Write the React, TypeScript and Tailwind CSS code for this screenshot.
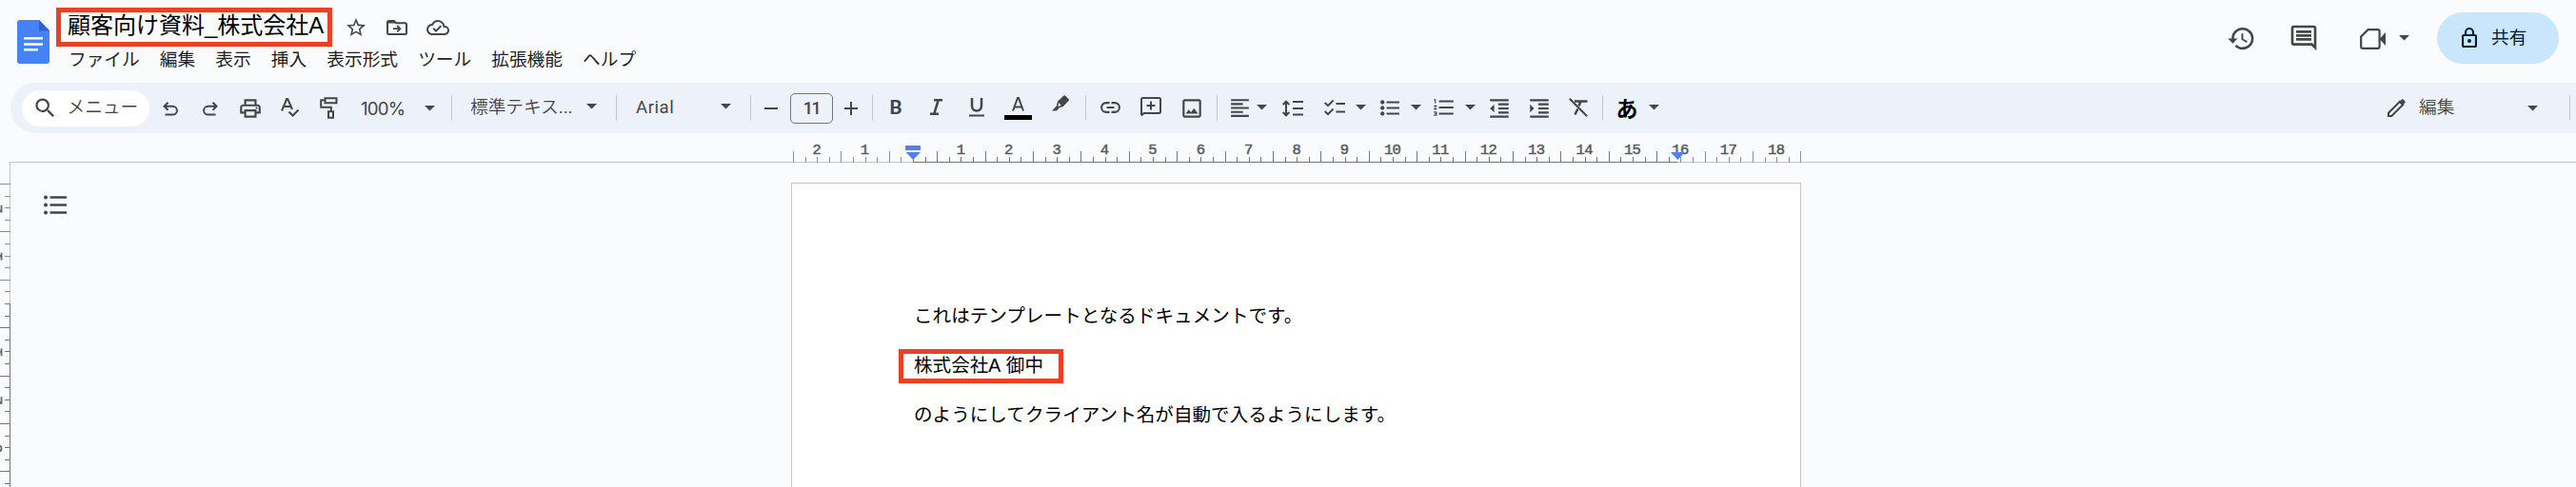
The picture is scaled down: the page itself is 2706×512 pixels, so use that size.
import React from "react";
import {
  MdStarOutline,
  MdOutlineCloudDone,
  MdSearch,
  MdOutlineImage,
  MdFormatAlignLeft,
  MdFormatListNumbered,
  MdFormatIndentDecrease,
  MdFormatIndentIncrease,
  MdHistory,
  MdOutlineInsertComment,
  MdOutlinePrint,
} from "react-icons/md";

const menus = ["ファイル", "編集", "表示", "挿入", "表示形式", "ツール", "拡張機能", "ヘルプ"];
const CM = 50.4;

function Cell({ className, children }: { className: string; children: React.ReactNode }) {
  return <div className={`flex h-[53px] shrink-0 items-center justify-center ${className}`}>{children}</div>;
}

function Sep({ className }: { className: string }) {
  return <div className={`h-[27px] w-px shrink-0 bg-[#c7c7c7] ${className}`} />;
}

function Caret({ className = "" }: { className?: string }) {
  return (
    <svg className={`h-[6px] w-[11px] shrink-0 ${className}`} viewBox="0 0 11 6">
      <path d="M0 0h11L5.5 5.5z" fill="#444746" />
    </svg>
  );
}

function Line({ w, h, className = "", sw = 2, children }: { w: number; h: number; className?: string; sw?: number; children: React.ReactNode }) {
  return (
    <svg width={w} height={h} viewBox={`0 0 ${w} ${h}`} className={`shrink-0 ${className}`} fill="none" stroke="currentColor" strokeWidth={sw}>
      {children}
    </svg>
  );
}

function Header() {
  return (
    <header className="flex h-[87px] shrink-0 items-start">
      <svg className="mt-[21px] ml-[18px] h-[46px] w-[34px] shrink-0" viewBox="0 0 34 46">
        <path d="M3 0h20l11 11v32a3 3 0 0 1-3 3H3a3 3 0 0 1-3-3V3a3 3 0 0 1 3-3z" fill="#4583f5" />
        <path d="M23 0l11 11.5H23z" fill="#2a63d0" />
        <path d="M7 18h20v2.6H7zM7 24.200h20v2.600H7zM7 30h15v2.600H7z" fill="#fff" />
      </svg>
      <div className="ml-[7px] flex flex-col pt-2">
        <div className="flex h-[41px] items-center">
          <div className="flex h-[41px] w-[290px] items-center border-[5px] border-[#ea4025] pl-[7px]">
            <h1 className="relative -top-[2px] text-[24px] leading-[30px] whitespace-nowrap text-black">顧客向け資料_株式会社A</h1>
          </div>
          <MdStarOutline className="ml-[13px] size-6 text-[#444746]" />
          <Line w={22} h={16} className="ml-[20px] text-[#444746]">
            <path d="M1 13.500V2.500Q1 1 2.500 1H8l2 2.300h9.500q1.500 0 1.500 1.500v8.700q0 1.500-1.500 1.500h-17Q1 15 1 13.500zM1 2.500h8" />
            <path d="M7 9.200h7M11.200 6l3.200 3.200-3.200 3.200" strokeWidth="1.800" />
          </Line>
          <MdOutlineCloudDone className="ml-[20px] size-6 text-[#444746]" />
        </div>
        <nav className="mt-px flex h-[26px] items-center gap-[21.200px] pl-[13px] text-[18.670px] whitespace-nowrap text-[#1f1f1f]">
          {menus.map((m) => (
            <span key={m}>{m}</span>
          ))}
        </nav>
      </div>
      <div className="mt-[13px] ml-auto flex h-[54px] items-center pr-[18px] text-[#444746]">
        <MdHistory className="size-[31px]" />
        <MdOutlineInsertComment className="ml-[34px] size-8" />
        <Line w={27} h={22} sw={2.2} className="ml-[43px] mt-[2px]">
          <path d="M8.500 1.200h10.300q1.800 0 1.800 1.800v16q0 1.800-1.800 1.800H3q-1.800 0-1.800-1.800V8.500z" />
          <path d="M20.500 11L27 4v14z" fill="currentColor" stroke="none" />
        </Line>
        <Caret className="-mt-px ml-[14px]" />
        <button className="ml-[29px] flex h-[54px] w-[128px] items-center rounded-full bg-[#c9e6fd] pl-[26px] text-[#001d35]">
          <Line w={16} h={21} sw={2.1} className="-mt-px">
            <rect x="1.050" y="8" width="13.900" height="12" rx="1" />
            <path d="M4 8V5a4 4 0 0 1 8 0v3" />
            <circle cx="8" cy="14" r="2" fill="currentColor" stroke="none" />
          </Line>
          <span className="ml-[15px] text-[18.670px]">共有</span>
        </button>
      </div>
    </header>
  );
}

function Toolbar() {
  return (
    <div className="ml-[11px] flex h-[53px] shrink-0 items-center rounded-l-[27px] bg-[#edf2fa] pr-[6px] pl-3 font-['Roboto','Noto_Sans_CJK_JP',sans-serif] text-[18.670px] whitespace-nowrap text-[#444746]">
      <div className="flex h-[38px] w-[134px] shrink-0 items-center rounded-full bg-white">
        <MdSearch className="ml-[11px] size-[27px]" />
        <span className="-mt-[2px] ml-[9.500px] font-[350]">メニュー</span>
      </div>
      <Cell className="ml-px w-[42px]">
        <Line w={16} h={15} className="mt-px">
          <path d="M5.500 .8L1.500 4.800l4 4M1.500 4.800h9a4.400 4.400 0 0 1 0 8.800H2.500" />
        </Line>
      </Cell>
      <Cell className="w-[42px]">
        <Line w={16} h={15} className="mt-px">
          <path d="M10.500 .8l4 4-4 4M14.500 4.800h-9a4.400 4.400 0 0 0 0 8.800h8" />
        </Line>
      </Cell>
      <Cell className="w-[42px]"><MdOutlinePrint className="size-[26px]" /></Cell>
      <Cell className="w-[42px]">
        <Line w={19} h={20} className="-mt-[2px] -ml-px">
          <path d="M1 13.500L6.200 1h1L12 12M3 9h7M8.500 14.500l4 4 6-6" />
        </Line>
      </Cell>
      <Cell className="w-[42px]">
        <Line w={19} h={23} className="-ml-[3px]">
          <path d="M5.500 1.200h12v5h-12zM5.500 3.200H1.200v7.600h10.600v4.500M9 15.300h5v6.400H9z" />
        </Line>
      </Cell>
      <span className="mt-[2px] ml-[11px] w-[67px] shrink-0 font-['Inter'] tracking-[-0.800px]">100%</span>
      <Caret />
      <Sep className="ml-[17px]" />
      <span className="-mt-[2px] ml-[19px] w-[122px] shrink-0 font-[350]">標準テキス<span className="font-['Roboto'] font-normal">...</span></span>
      <Caret className="-mt-[3px]" />
      <Sep className="ml-5" />
      <span className="-mt-px ml-5 w-[89px] shrink-0 tracking-[0.500px]">Arial</span>
      <Caret className="-mt-[3px]" />
      <Sep className="ml-5" />
      <Cell className="w-[41px]"><Line w={14} h={14}><path d="M0 7h14" /></Line></Cell>
      <div className="flex h-[32px] w-[45px] shrink-0 items-center justify-center rounded-[5px] border border-[#747775] text-[18px] font-medium">
        <span className="-mt-px tracking-[-1.500px]">11</span>
      </div>
      <Cell className="w-[38px]"><Line w={14} h={14}><path d="M0 7h14M7 0v14" /></Line></Cell>
      <Sep className="ml-[3px]" />
      <Cell className="w-[48px] text-[20.500px] font-bold"><span className="-mt-px">B</span></Cell>
      <Cell className="w-[37px]">
        <Line w={13} h={17} sw={2.5} className="-mt-[2px]"><path d="M4 1.200h9M0 15.700h9M8.700 1.200L4.300 15.700" /></Line>
      </Cell>
      <Cell className="w-[48px]">
        <Line w={16} h={20} className="-mt-px">
          <path d="M3 0v8.500a5 5 0 0 0 10 0V0" strokeWidth="2.500" />
          <path d="M0 18.500h16" />
        </Line>
      </Cell>
      <Cell className="w-[39px]">
        <Line w={29} h={24} className="mt-px">
          <path d="M9 14.500L14 1h1l5 13.500M10.500 10.500h8" />
          <path d="M0 21.500h29" stroke="#000" strokeWidth="5" />
        </Line>
      </Cell>
      <Cell className="w-[51px]">
        <svg width="19" height="17" viewBox="0 0 19 17" className="-mt-[11px] -ml-px" fill="currentColor">
          <path fillRule="evenodd" d="M6 6.500L12.200.7q1-.9 2 0l3.300 3.200q1 1 0 2L11.500 12.200 8 13 5 16.500H0L4.800 11.500zM7.300 8l-1 3.500 1 .2 2.500-1z" />
        </svg>
      </Cell>
      <Sep className="" />
      <Cell className="w-[51px]">
        <Line w={21} h={12} sw={2.1} className="-mt-px"><path d="M9.500 1.100H6a4.900 4.900 0 0 0 0 9.800h3.500M11.500 1.100H15a4.900 4.900 0 0 1 0 9.800h-3.500M6.500 6h8" /></Line>
      </Cell>
      <Cell className="w-[33px]">
        <Line w={22} h={21} className="-mt-[2px]">
          <path d="M1 19V2.500Q1 1 2.500 1h17Q21 1 21 2.500v13q0 1.500-1.500 1.500H3.500L1 19.500M11 4.500v9M6.500 9h9" />
        </Line>
      </Cell>
      <Cell className="w-[53px]"><MdOutlineImage className="size-[26px]" /></Cell>
      <Sep className="" />
      <Cell className="ml-[6px] w-[34px]"><MdFormatAlignLeft className="size-[25px]" /></Cell>
      <Caret className="-mt-px ml-px" />
      <Cell className="w-[54px]">
        <Line w={22} h={18}>
          <path d="M11 2h11M11 9h11M11 15.500h11M4 2v14M.7 5L4 1.700 7.300 5M.7 13L4 16.300 7.300 13" />
        </Line>
      </Cell>
      <Cell className="w-[34px]">
        <Line w={22} h={18} className="-mt-px">
          <path d="M12.500 5H22M12.500 13.500H22M.7 4l3.300 3.200L9.500 1.500M.7 13l3.300 3.200 5.500-5.700" />
        </Line>
      </Cell>
      <Caret className="-mt-px ml-[5px]" />
      <Cell className="ml-2 w-[34px]">
        <Line w={20} h={17} className="-mt-px">
          <path d="M6.500 2.500H20M6.500 8.500H20M6.500 14.500H20" />
          <path d="M2.200 .3a2.200 2.200 0 1 0 .01 0zM2.200 6.300a2.200 2.200 0 1 0 .01 0zM2.200 12.300a2.200 2.200 0 1 0 .01 0z" fill="currentColor" stroke="none" />
        </Line>
      </Cell>
      <Caret className="-mt-px ml-[5px]" />
      <Cell className="ml-[7px] w-[33px]"><MdFormatListNumbered className="-mt-px size-[26px]" /></Cell>
      <Caret className="-mt-px ml-[6px]" />
      <Cell className="w-[49px]"><MdFormatIndentDecrease className="size-[26px]" /></Cell>
      <Cell className="w-[35px]"><MdFormatIndentIncrease className="size-[26px]" /></Cell>
      <Cell className="w-[48px]">
        <Line w={20} h={20} className="-mt-px">
          <path d="M.8 .8l18.400 18.400" />
          <path d="M6 3.500h13.500M12.500 3.500l-2 5M9.300 11.500l-2.800 6" strokeWidth="2.500" />
        </Line>
      </Cell>
      <Sep className="ml-px" />
      <Cell className="ml-[3px] w-[45px] font-['Noto_Sans_CJK_JP'] text-[23px] font-bold text-black"><span className="-mt-px -ml-px">あ</span></Cell>
      <Caret className="-mt-px" />
      <Cell className="ml-auto w-[31px]">
        <Line w={19} h={19} className="-mt-px">
          <path d="M1 18v-3.300L13 2.700l3.300 3.300L4.300 18z" />
          <path d="M12 3.600L15 .6q.8-.8 1.600 0l1.800 1.800q.8.8 0 1.600l-3 3z" fill="currentColor" stroke="none" />
        </Line>
      </Cell>
      <span className="-mt-px ml-2 w-[114px] shrink-0 font-[350]">編集</span>
      <Caret className="mt-px" />
      <Sep className="ml-[33px]" />
    </div>
  );
}

function HorizontalRuler() {
  const ticks = Array.from({ length: 85 }, (_, i) => i);
  const labels = [2, 1, 0, 1, 2, 3, 4, 5, 6, 7, 8, 9, 10, 11, 12, 13, 14, 15, 16, 17, 18];
  return (
    <svg className="ml-[10px] block h-[31px] w-[2696px] shrink-0" viewBox="10 140 2696 31">
      <path d="M10 170.500H2706" stroke="#c4c7c5" />
      <path d="M960 170.500H1762" stroke="#747775" />
      {ticks.map((i) => {
        const x = Math.floor(833.5 + (i * CM) / 4) + 0.5;
        const inside = i >= 10 && i <= 73;
        return <path key={i} d={`M${x} ${i % 4 === 0 ? 159 : 165}V171`} stroke={inside ? "#747775" : "#8f918f"} />;
      })}
      <g fill="#5a5d5b" stroke="#5a5d5b" strokeWidth="0.5" fontSize="15.5" letterSpacing="-0.6" textAnchor="middle" className="font-['Liberation_Mono',monospace]">
        {labels.map((n, i) =>
          i === 2 ? null : (
            <text key={i} x={857.8 + i * CM} y="162">
              {n}
            </text>
          ),
        )}
      </g>
      <path d="M951 153h16v5h-16zM951.500 160h15.500l-7.750 8zM1755 160h15l-7.500 8z" fill="#4f82ee" />
    </svg>
  );
}

function VerticalRuler() {
  const ticks = Array.from({ length: 26 }, (_, i) => i);
  const labels = [2, 1, 0, 1, 2, 3];
  return (
    <svg className="h-[342px] w-[11px] shrink-0" viewBox="0 170 11 342">
      <path d="M10.500 170V320" stroke="#c4c7c5" />
      <path d="M10.500 320V512" stroke="#747775" />
      {ticks.map((i) => {
        const y = Math.floor(193.4 + (i * CM) / 4) + 0.5;
        return <path key={i} d={`M${i % 4 === 0 ? 0 : 5} ${y}H11`} stroke={i < 10 ? "#8f8f88" : "#747775"} />;
      })}
      <g fill="#5a5d5b" stroke="#5a5d5b" strokeWidth="0.5" fontSize="15.5" textAnchor="middle" className="font-['Liberation_Mono',monospace]">
        {labels.map((n, i) =>
          i === 2 ? null : (
            <text key={i} transform={`translate(2 ${219.5 + i * CM}) rotate(-90)`}>
              {n}
            </text>
          ),
        )}
      </g>
    </svg>
  );
}

export default function App() {
  return (
    <div className="flex h-[512px] w-[2706px] flex-col overflow-hidden bg-[#f9fbfd] font-['Liberation_Sans','Noto_Sans_CJK_JP',sans-serif]">
      <Header />
      <Toolbar />
      <HorizontalRuler />
      <div className="-mt-px flex h-[342px] shrink-0">
        <VerticalRuler />
        <div className="w-[820px] shrink-0 pt-[35px] pl-[35px] text-[#444746]">
          <Line w={24} h={21}>
            <path d="M6.500 2.500H24M6.500 10.500H24M6.500 18.500H24" strokeWidth="2.600" />
            <path d="M2 .5a2 2 0 1 0 .01 0zM2 8.500a2 2 0 1 0 .01 0zM2 16.500a2 2 0 1 0 .01 0z" fill="currentColor" stroke="none" />
          </Line>
        </div>
        <main className="mt-[22px] h-[340px] w-[1061px] border border-b-0 border-[#c4c7c5] bg-white pt-[121px] text-[19.550px] leading-[36px] tracking-[0.060px] whitespace-nowrap text-black">
          <p className="pl-[128px]">これはテンプレートとなるドキュメントです。</p>
          <p className="mt-[17px] ml-[112px] flex h-[36px] w-[173px] items-center border-[5px] border-[#ea4025] pl-[11px]">
            <span className="-mt-[2px] [word-spacing:1px]">株式会社A 御中</span>
          </p>
          <p className="mt-[15px] pl-[128px]">のようにしてクライアント名が自動で入るようにします。</p>
        </main>
      </div>
    </div>
  );
}
